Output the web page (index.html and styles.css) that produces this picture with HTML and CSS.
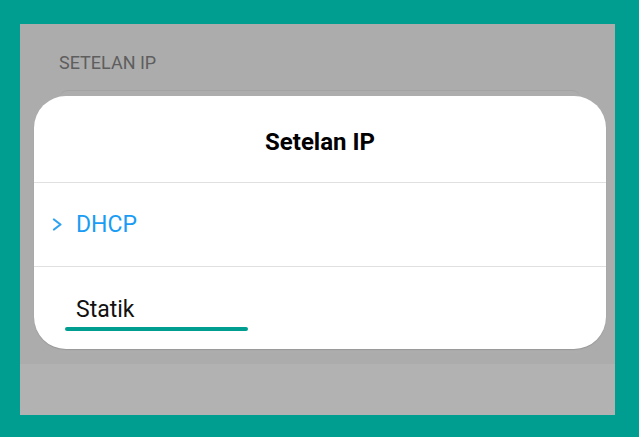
FILE: index.html
```html
<!DOCTYPE html>
<html lang="id">
<head>
  <meta charset="UTF-8" />
  <meta name="viewport" content="width=device-width, initial-scale=1" />
  <title>Setelan IP</title>
  <link rel="stylesheet" href="styles.css">
</head>
<body>
  <div class="screen">
    <div class="section-title">SETELAN IP</div>
    <div class="card-behind"></div>
    <div class="footer-band"></div>

    <div class="dialog">
      <h2 class="dialog-title">Setelan IP</h2>
      <div class="option selected">
        <svg class="chevron" width="11" height="13" viewBox="0 0 11 13">
          <path d="M2 1.5 L8.5 6.5 L2 11.5" fill="none" stroke="#2fa3f2" stroke-width="2.2" stroke-linecap="round" stroke-linejoin="round"/>
        </svg>
        <span>DHCP</span>
      </div>
      <div class="option">
        <span>Statik</span>
        <div class="underline"></div>
      </div>
    </div>
  </div>
</body>
</html>
```

FILE: styles.css
```css
body {
  margin: 0;
  background: #009e90;
  font-family: Roboto, "Liberation Sans", Arial, sans-serif;
  width: 639px;
  height: 437px;
  overflow: hidden;
}
.screen {
  position: relative;
  margin: 24px 0 0 20px;
  width: 595px;
  height: 391px;
  background: #acacac;
  display: flex;
  flex-direction: column;
}
.section-title {
  padding: 28px 0 0 39px;
  height: 38px;
  font-size: 18px;
  line-height: 22px;
  color: #5e5e5e;
}
.card-behind {
  margin: 0 35px 0 40px;
  height: 262px;
  border-top: 1px solid #a3a3a3;
  border-radius: 8px 8px 0 0;
  background: #adadad;
}
.footer-band {
  margin-top: auto;
  height: 51px;
  background: #b2b2b2;
}
.dialog {
  position: absolute;
  left: 14px;
  top: 72px;
  width: 572px;
  height: 253px;
  background: #fff;
  border-radius: 32px;
  box-shadow: 0 1px 1px rgba(0,0,0,0.12);
  display: flex;
  flex-direction: column;
}
.dialog-title {
  margin: 0;
  height: 86px;
  line-height: 92px;
  text-align: center;
  font-size: 24px;
  font-weight: bold;
  color: #000;
  border-bottom: 1px solid #e0e0e0;
}
.option {
  position: relative;
  height: 83px;
  display: flex;
  align-items: center;
  padding-left: 42px;
  font-size: 23px;
  color: #111;
}
.option + .option {
  border-top: 1px solid #e0e0e0;
}
.option.selected {
  color: #1a9cf4;
}
.chevron {
  position: absolute;
  left: 18px;
  top: 35px;
}
.option span {
  margin-top: 1px;
}
.option + .option span {
  margin-top: 4px;
}
.underline {
  position: absolute;
  left: 31px;
  top: 60px;
  width: 183px;
  height: 4px;
  border-radius: 2px;
  background: #009e90;
}
```
